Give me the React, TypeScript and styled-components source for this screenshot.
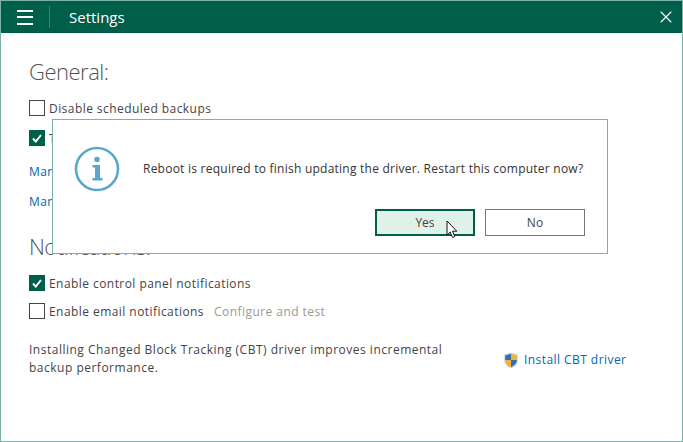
import { createGlobalStyle, styled } from "styled-components";
import { X } from "lucide-react";

const Global = createGlobalStyle`
  html, body { margin: 0; padding: 0; background: #fff; }
  body { font-family: "Open Sans", "Noto Sans", sans-serif; }
`;

const Window = styled.div`
  position: relative;
  box-sizing: border-box;
  width: 683px;
  height: 442px;
  border: 1px solid #7db3a6;
  background: #fff;
  overflow: hidden;
`;

const TitleBar = styled.header`
  display: flex;
  align-items: center;
  height: 32px;
  background: #005f4b;
  color: #fff;
`;

const MenuButton = styled.div`
  display: flex;
  justify-content: center;
  align-items: center;
  width: 48px;
  height: 22px;
  border-right: 1px solid #3b8270;
`;

const Title = styled.h1`
  flex: 1;
  margin: 0 0 0 19px;
  font-size: 15px;
  font-weight: 400;
`;

const CloseButton = styled.div`
  display: flex;
  align-items: center;
  margin-right: 6px;
`;

const Content = styled.main`
  padding: 24px 0 0 28px;
  color: #444;
`;

const Heading = styled.h2`
  margin: 0 0 9px;
  font-size: 22px;
  line-height: 28px;
  font-weight: 300;
  letter-spacing: -0.5px;
  color: #555;
`;

const RowGroup = styled.div<{ $gap?: number }>`
  display: flex;
  flex-direction: column;
  gap: ${(p) => p.$gap ?? 0}px;
`;

const Row = styled.div`
  display: flex;
  align-items: center;
  gap: 4px;
  height: 28px;
  font-size: 12px;
  letter-spacing: 0.44px;
  white-space: nowrap;
`;

const Box = styled.span<{ $checked?: boolean }>`
  display: flex;
  align-items: center;
  justify-content: center;
  box-sizing: border-box;
  width: 16px;
  height: 16px;
  border: 1px solid ${(p) => (p.$checked ? "#005f4b" : "#444")};
  background: ${(p) => (p.$checked ? "#005f4b" : "#fff")};
`;

const Muted = styled.span`
  margin-left: 6px;
  color: #999;
`;

const LinkText = styled.a`
  color: #0067b0;
  font-size: 12px;
  letter-spacing: 0.44px;
`;

const Links = styled.div`
  margin: 3px 0 17px;
`;

const LinkRow = styled.div`
  height: 30px;
  line-height: 30px;
`;

const Footer = styled.div`
  display: flex;
  margin-top: 16px;
  font-size: 12px;
  line-height: 18px;
`;

const FooterText = styled.p`
  margin: 0;
  width: 430px;
  letter-spacing: 0.5px;
`;

const Install = styled.div`
  display: flex;
  align-items: center;
  gap: 5px;
  margin: 10px 0 0 44px;
  height: 18px;
`;

const Dialog = styled.div`
  position: absolute;
  left: 51px;
  top: 118px;
  box-sizing: border-box;
  width: 556px;
  height: 135px;
  padding: 26px 22px 0 21px;
  border: 1px solid #7db3a6;
  background: #fff;
`;

const DialogBody = styled.div`
  display: flex;
  align-items: center;
  gap: 23px;
  font-size: 12px;
  letter-spacing: 0.24px;
  color: #333;
  white-space: nowrap;
`;

const Message = styled.span`
  padding-bottom: 2px;
`;

const Buttons = styled.div`
  display: flex;
  justify-content: flex-end;
  gap: 10px;
  margin-top: 17px;
`;

const Button = styled.div<{ $primary?: boolean }>`
  box-sizing: border-box;
  width: 100px;
  height: 27px;
  text-align: center;
  font-size: 12px;
  color: #444;
  border: ${(p) => (p.$primary ? "2px solid #005f4b" : "1px solid #757575")};
  line-height: ${(p) => (p.$primary ? "23px" : "25px")};
  background: ${(p) => (p.$primary ? "#dff1e8" : "#fff")};
`;

const Cursor = styled.svg`
  position: absolute;
  left: 444px;
  top: 218px;
`;

function MenuIcon() {
  return (
    <svg width="16" height="15" viewBox="0 0 16 15" fill="#fff">
      <rect x="0" y="0" width="16" height="2" />
      <rect x="0" y="6" width="16" height="2" />
      <rect x="0" y="13" width="16" height="2" />
    </svg>
  );
}

function TickIcon() {
  return (
    <svg width="10" height="9" viewBox="0 0 10 9">
      <path d="M1 4.500 3.800 7.500 9 1" fill="none" stroke="#fff" strokeWidth="2" />
    </svg>
  );
}

function InfoIcon() {
  return (
    <svg width="46" height="46" viewBox="0 0 46 46">
      <circle cx="23" cy="23" r="21" fill="none" stroke="#5ba7cc" strokeWidth="2.6" />
      <circle cx="23" cy="13.500" r="2.800" fill="#5ba7cc" />
      <path d="M18.500 19h7.500v13h2.500v2.500h-10V32h2.500V21.500h-2.500z" fill="#5ba7cc" />
    </svg>
  );
}

function ShieldIcon() {
  return (
    <svg width="16" height="17" viewBox="0 0 16 17">
      <path d="M8 .5 14.800 2.600v6c0 3.500-2.800 6.300-6.800 7.900C4 14.900 1.200 12.100 1.200 8.600v-6z" fill="#cfd6dc" />
      <path d="M8 1.800V8H2.200V3.400z" fill="#2f6fb5" />
      <path d="M8 1.800V8h5.800V3.400z" fill="#f2b233" />
      <path d="M2.200 8H8v7.200C4.500 13.700 2.200 11.400 2.200 8.600z" fill="#f2b233" />
      <path d="M13.800 8H8v7.200c3.500-1.500 5.800-3.800 5.800-6.600z" fill="#2f6fb5" />
    </svg>
  );
}

export default function App() {
  return (
    <>
      <Global />
      <Window>
        <TitleBar>
          <MenuButton>
            <MenuIcon />
          </MenuButton>
          <Title>Settings</Title>
          <CloseButton>
            <X size={20} strokeWidth={1.3} />
          </CloseButton>
        </TitleBar>
        <Content>
          <Heading>General:</Heading>
          <RowGroup $gap={2}>
            <Row>
              <Box />
              Disable scheduled backups
            </Row>
            <Row>
              <Box $checked>
                <TickIcon />
              </Box>
              Throttle backup activity
            </Row>
          </RowGroup>
          <Links>
            <LinkRow>
              <LinkText>Manage</LinkText>
            </LinkRow>
            <LinkRow>
              <LinkText>Manage</LinkText>
            </LinkRow>
          </Links>
          <Heading>Notifications:</Heading>
          <RowGroup>
            <Row>
              <Box $checked>
                <TickIcon />
              </Box>
              Enable control panel notifications
            </Row>
            <Row>
              <Box />
              Enable email notifications
              <Muted>Configure and test</Muted>
            </Row>
          </RowGroup>
          <Footer>
            <FooterText>
              Installing Changed Block Tracking (CBT) driver improves incremental backup performance.
            </FooterText>
            <Install>
              <ShieldIcon />
              <LinkText>Install CBT driver</LinkText>
            </Install>
          </Footer>
        </Content>
        <Dialog>
          <DialogBody>
            <InfoIcon />
            <Message>Reboot is required to finish updating the driver. Restart this computer now?</Message>
          </DialogBody>
          <Buttons>
            <Button $primary>Yes</Button>
            <Button>No</Button>
          </Buttons>
        </Dialog>
        <Cursor width="14" height="20" viewBox="0 0 14 20">
          <path d="M2 2v14l3.200-3 2.300 5.500 2.300-1-2.300-5.300h4.300z" fill="#fff" stroke="#111" strokeWidth="1" />
        </Cursor>
      </Window>
    </>
  );
}
